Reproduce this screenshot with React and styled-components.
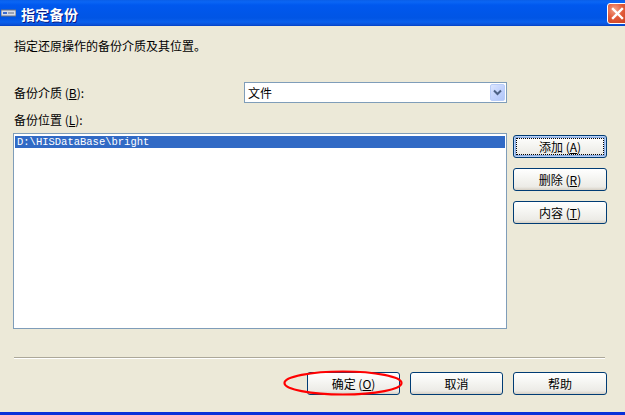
import React from "react";
import styled, { createGlobalStyle } from "styled-components";

const Global = createGlobalStyle`
  html, body { margin: 0; padding: 0; background: #ECE9D8; }
  body { font-family: "Noto Sans CJK SC", "Noto Sans", sans-serif; }
`;

const Window = styled.div`
  width: 625px;
  height: 415px;
  background: #ECE9D8;
  display: flex;
  flex-direction: column;
  overflow: hidden;
  position: relative;
  border-bottom: 3px solid #0831D9;
  box-sizing: border-box;
  font-size: 12px;
  color: #000;
`;

const TitleBar = styled.div`
  height: 26px;
  flex: none;
  display: flex;
  align-items: center;
  background: linear-gradient(
    to bottom,
    #0A5FE8 0px,
    #0A66F5 2px,
    #0058EE 5px,
    #0055E5 18px,
    #0A60EC 22px,
    #0A4FD6 25px,
    #003DC0 26px
  );
`;

const AppIcon = styled.svg`
  margin-left: 1px;
  margin-right: 5px;
  flex: none;
`;

const TitleText = styled.div`
  flex: 1;
  color: #fff;
  font-weight: bold;
  font-size: 14px;
  line-height: 16px;
  letter-spacing: 0.3px;
  text-shadow: 1px 1px 0 #0A1883;
  padding-top: 1px;
`;

const CloseBtn = styled.div`
  width: 21px;
  height: 21px;
  margin-right: -3px;
  box-sizing: border-box;
  border: 1px solid #fff;
  border-radius: 3px;
  background: radial-gradient(circle at 35% 30%, #F2A48A 0%, #E25A3A 45%, #C63D1C 100%);
  display: flex;
  align-items: center;
  justify-content: center;
  flex: none;
`;

const Body = styled.div`
  flex: 1;
  display: flex;
  flex-direction: column;
  padding: 14px 18px 0 14px;
`;

const Text = styled.div`
  line-height: 12px;
  height: 12px;
  white-space: nowrap;
  margin-top: ${(p) => p.$mt || 0}px;
`;

const Row = styled.div`
  display: flex;
  align-items: ${(p) => p.$align || "center"};
  margin-top: ${(p) => p.$mt || 0}px;
  margin-left: ${(p) => p.$ml || 0}px;
  gap: ${(p) => p.$gap || 0}px;
  justify-content: ${(p) => p.$justify || "flex-start"};
`;

const FieldLabel = styled.div`
  width: 230px;
  line-height: 12px;
  white-space: nowrap;
`;

const Combo = styled.div`
  width: 263px;
  height: 21px;
  box-sizing: border-box;
  border: 1px solid #7F9DB9;
  background: #fff;
  display: flex;
  align-items: center;
  justify-content: space-between;
  padding: 0 1px 0 3px;
`;

const ComboBtn = styled.div`
  width: 15px;
  height: 17px;
  border-radius: 2px;
  background: linear-gradient(135deg, #DCE6FE 0%, #C3D3FD 50%, #B1C6F8 100%);
  border: 1px solid #B9CDF9;
  box-sizing: border-box;
  display: flex;
  align-items: center;
  justify-content: center;
`;

const ListBox = styled.div`
  width: 494px;
  height: 196px;
  box-sizing: border-box;
  border: 1px solid #7F9DB9;
  background: #fff;
  padding: 2px 1px;
`;

const ListItem = styled.div`
  height: 12px;
  line-height: 12px;
  background: ${(p) => (p.$selected ? "#316AC5" : "transparent")};
  color: ${(p) => (p.$selected ? "#fff" : "#000")};
  font-family: "Liberation Mono", "DejaVu Sans Mono", monospace;
  font-size: 10.5px;
  padding-left: 2px;
  white-space: nowrap;
`;

const ButtonCol = styled.div`
  display: flex;
  flex-direction: column;
  gap: 10px;
  padding-top: 2px;
`;

const Button = styled.div`
  position: relative;
  width: ${(p) => p.$w || 94}px;
  height: 23px;
  box-sizing: border-box;
  border: 1px solid #003C74;
  border-radius: 3px;
  background: linear-gradient(to bottom, #FFFFFF 0%, #F6F6F3 40%, #ECEBE6 85%, #D6D0C5 100%);
  display: flex;
  align-items: center;
  justify-content: center;
  line-height: 12px;
  white-space: pre;
  ${(p) =>
    p.$focused &&
    `box-shadow: inset 0 0 0 1px #B8D0F5, inset 0 0 0 2px #89ADE4;
     &::after {
       content: "";
       position: absolute;
       inset: 2px;
       border: 1px dotted #000;
       border-radius: 1px;
     }`}
`;

const Separator = styled.div`
  margin-top: 28px;
  width: 591px;
  height: 1px;
  background: #ACA899;
  border-bottom: 1px solid #fff;
`;

const Ellipse = styled.svg`
  position: absolute;
  left: -25px;
  top: -3px;
  pointer-events: none;
  overflow: visible;
`;

const U = styled.span`
  text-decoration: underline;
`;

export default function App() {
  return (
    <>
      <Global />
      <Window>
        <TitleBar>
          <AppIcon width="15" height="8" viewBox="0 0 15 8">
            <rect x="0" y="1" width="15" height="6" fill="#D8DCE8" stroke="#6A7380" strokeWidth="1" />
            <rect x="2" y="3" width="4" height="2" fill="#3A6BD0" />
            <rect x="7" y="3" width="6" height="2" fill="#9AA3B5" />
          </AppIcon>
          <TitleText>指定备份</TitleText>
          <CloseBtn>
            <svg width="13" height="13" viewBox="0 0 13 13">
              <path d="M2 2 L11 11 M11 2 L2 11" stroke="#fff" strokeWidth="2.4" strokeLinecap="square" />
            </svg>
          </CloseBtn>
        </TitleBar>
        <Body>
          <Text>指定还原操作的备份介质及其位置。</Text>
          <Row $mt={30}>
            <FieldLabel>
              备份介质 (<U>B</U>):
            </FieldLabel>
            <Combo>
              <span>文件</span>
              <ComboBtn>
                <svg width="9" height="7" viewBox="0 0 9 7">
                  <path d="M1 1.5 L4.5 5 L8 1.5" stroke="#4D6185" strokeWidth="2" fill="none" />
                </svg>
              </ComboBtn>
            </Combo>
          </Row>
          <Text $mt={11}>
            备份位置 (<U>L</U>):
          </Text>
          <Row $mt={7} $ml={-1} $gap={6} $align="flex-start">
            <ListBox>
              <ListItem $selected>D:\HISDataBase\bright</ListItem>
            </ListBox>
            <ButtonCol>
              <Button $focused>
                {"添加 ("}<U>A</U>)
              </Button>
              <Button>
                {"删除 ("}<U>R</U>)
              </Button>
              <Button>
                {"内容 ("}<U>T</U>)
              </Button>
            </ButtonCol>
          </Row>
          <Separator />
          <Row $mt={13} $gap={10} $justify="flex-end">
            <Button $w={93}>
              {"确定 ("}<U>O</U>)
              <Ellipse width="120" height="26" viewBox="0 0 120 26">
                <ellipse cx="60" cy="13" rx="58.5" ry="11.5" fill="none" stroke="#FF0000" strokeWidth="2.2" />
              </Ellipse>
            </Button>
            <Button $w={93}>取消</Button>
            <Button $w={94}>帮助</Button>
          </Row>
        </Body>
      </Window>
    </>
  );
}
